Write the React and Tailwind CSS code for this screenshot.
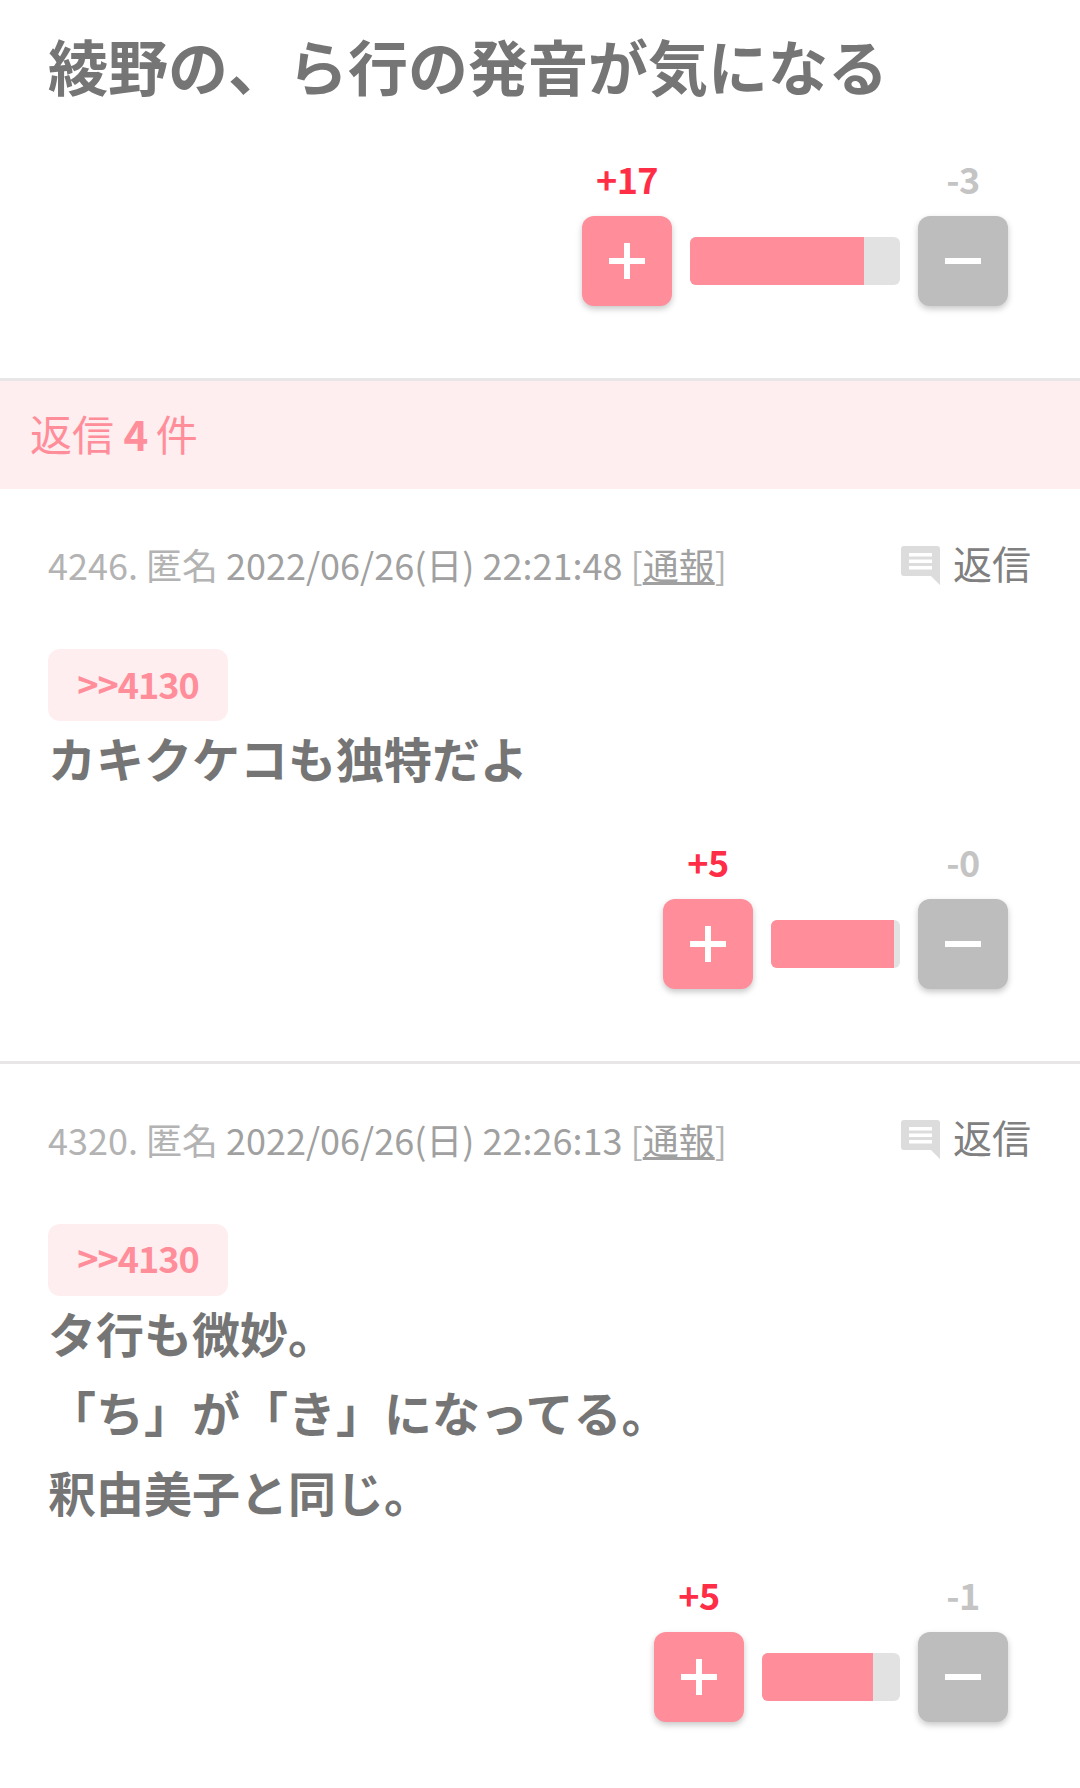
import React from "react";

const comments = [
  {
    no: "4246",
    date: "2022/06/26(日) 22:21:48",
    lines: ["カキクケコも独特だよ"],
    plus: 5,
    minus: 0,
    bar: "w-[129px]",
    fill: "w-[123px]",
  },
  {
    no: "4320",
    date: "2022/06/26(日) 22:26:13",
    lines: ["タ行も微妙。", "「ち」が「き」になってる。", "釈由美子と同じ。"],
    plus: 5,
    minus: 1,
    bar: "w-[138px]",
    fill: "w-[111px]",
  },
];

const PlusIcon = () => (
  <svg width="36" height="36" viewBox="0 0 36 36" fill="#fff">
    <rect x="0" y="15" width="36" height="6" />
    <rect x="15" y="0" width="6" height="36" />
  </svg>
);

const MinusIcon = () => (
  <svg width="36" height="36" viewBox="0 0 36 36" fill="#fff">
    <rect x="0" y="15" width="36" height="6" />
  </svg>
);

const ReplyIcon = () => (
  <svg width="39" height="39" viewBox="0 0 39 39">
    <path d="M3 0h33a3 3 0 0 1 3 3v36l-9-9H3a3 3 0 0 1-3-3V3a3 3 0 0 1 3-3z" fill="#dcdcdc" />
    <rect x="8" y="7" width="23" height="3.5" fill="#fff" />
    <rect x="8" y="13.5" width="23" height="3.5" fill="#fff" />
    <rect x="8" y="20" width="23" height="3.5" fill="#fff" />
  </svg>
);

const Votes = ({ plus, minus, bar, fill }) => (
  <div className="flex justify-end pr-[72px]">
    <div className="flex flex-col items-center">
      <span className="h-[54px] mb-[9px] text-[36px] leading-[50px] tracking-[-0.5px] font-bold text-[#ff2d46]">+{plus}</span>
      <button className="w-[90px] h-[90px] rounded-xl bg-[#ff8d9a] flex items-center justify-center shadow-[0_3px_6px_rgba(0,0,0,0.22)]">
        <PlusIcon />
      </button>
    </div>
    <div className={`${bar} h-12 mx-[18px] mt-[84px] rounded-md bg-[#e2e2e2] overflow-hidden`}>
      <div className={`${fill} h-full bg-[#ff8d9a]`} />
    </div>
    <div className="flex flex-col items-center">
      <span className="h-[54px] mb-[9px] text-[36px] leading-[50px] tracking-[-0.5px] font-bold text-[#c4c4c4]">-{minus}</span>
      <button className="w-[90px] h-[90px] rounded-xl bg-[#bdbdbd] flex items-center justify-center shadow-[0_3px_6px_rgba(0,0,0,0.22)]">
        <MinusIcon />
      </button>
    </div>
  </div>
);

const Comment = ({ c, last }) => (
  <section className={last ? "pb-[72px]" : "pb-[72px] border-b-[3px] border-[#e8e6e6]"}>
    <div className="flex justify-between items-center pt-[50px] pl-12 pr-[49px] h-[100px]">
      <p className="text-[36px] leading-[48px] text-[#b3b3b3]">
        {c.no}. 匿名 <span className="text-[#a0a0a0]">{c.date}</span> [<span className="underline text-[#a0a0a0]">通報</span>]
      </p>
      <div className="flex items-center gap-[13px] -mt-[5px] text-[39px] leading-[48px] text-[#808080]">
        <span className="mt-[7px]">
          <ReplyIcon />
        </span>
        <span>返信</span>
      </div>
    </div>
    <div className="mt-[60px] ml-12 w-[180px] h-[72px] rounded-xl bg-[#ffeef0] flex items-center justify-center text-[36px] tracking-[-1px] font-bold pb-[5px] text-[#ff8d9a]">
      &gt;&gt;4130
    </div>
    <div className="px-12 -mt-[3px] mb-[38px] text-[48px] leading-[79.5px] font-bold text-[#757575]">
      {c.lines.map((line) => (
        <p key={line}>{line}</p>
      ))}
    </div>
    <Votes plus={c.plus} minus={c.minus} bar={c.bar} fill={c.fill} />
  </section>
);

export default function App() {
  return (
    <div className="w-[1080px] min-h-[1788px] bg-white overflow-hidden font-['Noto_Sans_CJK_JP','Noto_Sans',sans-serif]">
      <header className="border-b-[3px] border-[#e8e6e6] pt-5 pb-[72px]">
        <h1 className="px-12 mb-[43px] text-[60px] leading-[90px] font-bold text-[#757575]">綾野の、ら行の発音が気になる</h1>
        <Votes plus={17} minus={3} bar="w-[210px]" fill="w-[174px]" />
      </header>
      <div className="h-[108px] bg-[#ffeef0] pl-[30px] pb-[5px] flex items-center text-[42px] text-[#ff8d9a]">
        返信&nbsp;<b className="font-bold">4</b>&nbsp;<span className="-ml-[2px]">件</span>
      </div>
      {comments.map((c, i) => (
        <Comment key={c.no} c={c} last={i === comments.length - 1} />
      ))}
    </div>
  );
}
